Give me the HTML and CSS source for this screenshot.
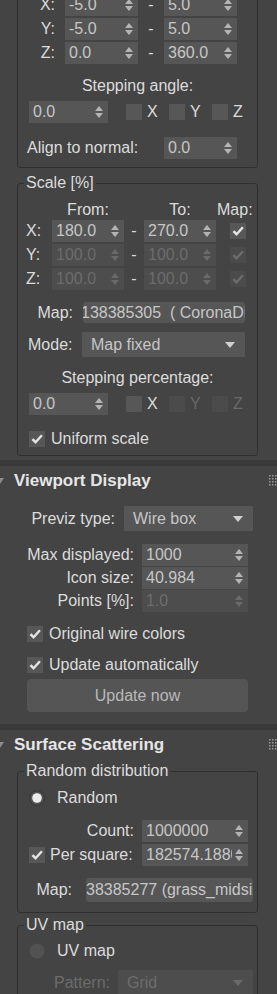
FILE: index.html
```html
<!DOCTYPE html>
<html lang="en">
<head>
    <meta charset="UTF-8">
    <meta name="viewport" content="width=device-width, initial-scale=1.0">
    <title>Corona Scatter</title>
    <link rel="stylesheet" href="styles.css">
</head>
<body>
    <!-- Parameters rollout (scrolled, top cut off) -->
    <div class="rollout rollout-cut">
        <div class="group group-top">
            <div class="range-row">
                <span class="axis">X:</span>
                <div class="spinner w73"><span class="val">-5.0</span><span class="arrows"></span></div>
                <span class="dash">-</span>
                <div class="spinner w73"><span class="val">5.0</span><span class="arrows"></span></div>
            </div>
            <div class="range-row">
                <span class="axis">Y:</span>
                <div class="spinner w73"><span class="val">-5.0</span><span class="arrows"></span></div>
                <span class="dash">-</span>
                <div class="spinner w73"><span class="val">5.0</span><span class="arrows"></span></div>
            </div>
            <div class="range-row">
                <span class="axis">Z:</span>
                <div class="spinner w73"><span class="val">0.0</span><span class="arrows"></span></div>
                <span class="dash">-</span>
                <div class="spinner w73"><span class="val">360.0</span><span class="arrows"></span></div>
            </div>

            <div class="caption cap-angle">Stepping angle:</div>
            <div class="step-row">
                <div class="spinner w79"><span class="val">0.0</span><span class="arrows"></span></div>
                <label class="axis-check first"><span class="check"></span>X</label>
                <label class="axis-check"><span class="check"></span>Y</label>
                <label class="axis-check"><span class="check"></span>Z</label>
            </div>

            <div class="align-row">
                <span class="align-label">Align to normal:</span>
                <div class="spinner w73"><span class="val">0.0</span><span class="arrows"></span></div>
            </div>
        </div>

        <fieldset class="group group-scale">
            <legend>Scale [%]</legend>
            <div class="scale-head">
                <span class="sh-axis"></span>
                <span class="sh-col">From:</span>
                <span class="sh-dash"></span>
                <span class="sh-col">To:</span>
                <span class="sh-map">Map:</span>
            </div>
            <div class="scale-row">
                <span class="s-axis">X:</span>
                <div class="spinner w72"><span class="val">180.0</span><span class="arrows"></span></div>
                <span class="s-dash">-</span>
                <div class="spinner w72"><span class="val">270.0</span><span class="arrows"></span></div>
                <span class="check on map-check"><svg viewBox="0 0 16 16"><polygon points="2.5,9 4.5,7.3 6.6,9.6 12,3.4 13.8,5 6.6,13"/></svg></span>
            </div>
            <div class="scale-row">
                <span class="s-axis">Y:</span>
                <div class="spinner w72 off"><span class="val">100.0</span><span class="arrows"></span></div>
                <span class="s-dash">-</span>
                <div class="spinner w72 off"><span class="val">100.0</span><span class="arrows"></span></div>
                <span class="check on off map-check"><svg viewBox="0 0 16 16"><polygon points="2.5,9 4.5,7.3 6.6,9.6 12,3.4 13.8,5 6.6,13"/></svg></span>
            </div>
            <div class="scale-row">
                <span class="s-axis">Z:</span>
                <div class="spinner w72 off"><span class="val">100.0</span><span class="arrows"></span></div>
                <span class="s-dash">-</span>
                <div class="spinner w72 off"><span class="val">100.0</span><span class="arrows"></span></div>
                <span class="check on off map-check"><svg viewBox="0 0 16 16"><polygon points="2.5,9 4.5,7.3 6.6,9.6 12,3.4 13.8,5 6.6,13"/></svg></span>
            </div>

            <div class="map-row">
                <span class="map-label">Map:</span>
                <div class="text-field scale-map"><span class="scroll-text">138385305  ( CoronaDistance )</span></div>
            </div>
            <div class="mode-row">
                <span class="mode-label">Mode:</span>
                <div class="combo mode-combo">Map fixed</div>
            </div>

            <div class="caption cap-percent">Stepping percentage:</div>
            <div class="step-row">
                <div class="spinner w79"><span class="val">0.0</span><span class="arrows"></span></div>
                <label class="axis-check first"><span class="check"></span>X</label>
                <label class="axis-check off"><span class="check off"></span>Y</label>
                <label class="axis-check off"><span class="check off"></span>Z</label>
            </div>

            <label class="check-row uniform">
                <span class="check on"><svg viewBox="0 0 16 16"><polygon points="2.5,9 4.5,7.3 6.6,9.6 12,3.4 13.8,5 6.6,13"/></svg></span>
                Uniform scale
            </label>
        </fieldset>
    </div>

    <!-- Viewport Display -->
    <div class="rollout rollout-viewport">
        <div class="rollout-head">
            <svg class="twisty" viewBox="0 0 8 6"><polygon points="0,0 8,0 4,6"/></svg>
            <span class="rollout-title">Viewport Display</span>
            <svg class="grip" viewBox="0 0 8 12"><rect x="0" y="0" width="1.5" height="1.5"/><rect x="3" y="0" width="1.5" height="1.5"/><rect x="6" y="0" width="1.5" height="1.5"/><rect x="0" y="3" width="1.5" height="1.5"/><rect x="3" y="3" width="1.5" height="1.5"/><rect x="6" y="3" width="1.5" height="1.5"/><rect x="0" y="6" width="1.5" height="1.5"/><rect x="3" y="6" width="1.5" height="1.5"/><rect x="6" y="6" width="1.5" height="1.5"/><rect x="0" y="9" width="1.5" height="1.5"/><rect x="3" y="9" width="1.5" height="1.5"/><rect x="6" y="9" width="1.5" height="1.5"/></svg>
        </div>

        <div class="previz-row">
            <span class="previz-label">Previz type:</span>
            <div class="combo previz-combo">Wire box</div>
        </div>

        <div class="field-row first-field">
            <span class="field-label">Max displayed:</span>
            <div class="spinner w106"><span class="val">1000</span><span class="arrows"></span></div>
        </div>
        <div class="field-row">
            <span class="field-label">Icon size:</span>
            <div class="spinner w106"><span class="val">40.984</span><span class="arrows"></span></div>
        </div>
        <div class="field-row">
            <span class="field-label">Points [%]:</span>
            <div class="spinner w106 off"><span class="val">1.0</span><span class="arrows"></span></div>
        </div>

        <label class="check-row wire-colors">
            <span class="check on"><svg viewBox="0 0 16 16"><polygon points="2.5,9 4.5,7.3 6.6,9.6 12,3.4 13.8,5 6.6,13"/></svg></span>
            Original wire colors
        </label>
        <label class="check-row auto-update">
            <span class="check on"><svg viewBox="0 0 16 16"><polygon points="2.5,9 4.5,7.3 6.6,9.6 12,3.4 13.8,5 6.6,13"/></svg></span>
            Update automatically
        </label>
        <button class="update-btn">Update now</button>
    </div>

    <!-- Surface Scattering -->
    <div class="rollout rollout-surface">
        <div class="rollout-head">
            <svg class="twisty" viewBox="0 0 8 6"><polygon points="0,0 8,0 4,6"/></svg>
            <span class="rollout-title">Surface Scattering</span>
            <svg class="grip" viewBox="0 0 8 12"><rect x="0" y="0" width="1.5" height="1.5"/><rect x="3" y="0" width="1.5" height="1.5"/><rect x="6" y="0" width="1.5" height="1.5"/><rect x="0" y="3" width="1.5" height="1.5"/><rect x="3" y="3" width="1.5" height="1.5"/><rect x="6" y="3" width="1.5" height="1.5"/><rect x="0" y="6" width="1.5" height="1.5"/><rect x="3" y="6" width="1.5" height="1.5"/><rect x="6" y="6" width="1.5" height="1.5"/><rect x="0" y="9" width="1.5" height="1.5"/><rect x="3" y="9" width="1.5" height="1.5"/><rect x="6" y="9" width="1.5" height="1.5"/></svg>
        </div>

        <fieldset class="group group-random">
            <legend>Random distribution</legend>
            <label class="radio-row">
                <svg class="radio" viewBox="0 0 16 16"><circle cx="8" cy="8" r="7.2" fill="#555" stroke="#383838" stroke-width="1.2"/><circle cx="8" cy="8" r="4.8" fill="#ececec"/></svg>
                Random
            </label>
            <div class="count-row">
                <span class="count-label">Count:</span>
                <div class="spinner w106"><span class="val">1000000</span><span class="arrows"></span></div>
            </div>
            <div class="persq-row">
                <span class="check on"><svg viewBox="0 0 16 16"><polygon points="2.5,9 4.5,7.3 6.6,9.6 12,3.4 13.8,5 6.6,13"/></svg></span>
                <span class="persq-label">Per square:</span>
                <div class="spinner w106"><span class="val">182574.1880</span><span class="arrows"></span></div>
            </div>
            <div class="map-row random-map">
                <span class="map-label">Map:</span>
                <div class="text-field surface-map"><span class="scroll-text">38385277 (grass_midsize)</span></div>
            </div>
        </fieldset>

        <fieldset class="group group-uv">
            <legend>UV map</legend>
            <label class="radio-row">
                <svg class="radio" viewBox="0 0 16 16"><circle cx="8" cy="8" r="7.6" fill="#525252"/></svg>
                UV map
            </label>
            <div class="pattern-row">
                <span class="pattern-label">Pattern:</span>
                <div class="combo pattern-combo off">Grid</div>
            </div>
        </fieldset>
    </div>
</body>
</html>
```

FILE: styles.css
```css
body {
    margin: 0;
    width: 277px;
    height: 994px;
    overflow: hidden;
    background: #444444;
    color: #dcdcdc;
    font-family: "Liberation Sans", Arial, sans-serif;
    font-size: 16px;
    line-height: 20px;
}

/* rollouts */
.rollout {
    border-bottom: 6px solid #393939;
}
.rollout-cut {
    padding-bottom: 4px;
}
.rollout-viewport {
    padding-bottom: 12px;
}
.rollout-head {
    height: 30px;
    display: flex;
    align-items: center;
}
.twisty {
    width: 8px;
    height: 6px;
    margin-left: -4px;
    fill: #8c8c8c;
    flex-shrink: 0;
}
.rollout-title {
    margin-left: 10px;
    font-weight: bold;
    font-size: 17px;
    color: #e6e6e6;
}
.grip {
    margin-left: auto;
    width: 8px;
    height: 12px;
    fill: #9a9a9a;
}

/* group boxes */
.group {
    margin: 0 0 0 17px;
    width: 241px;
    box-sizing: border-box;
    border: 1px solid #2f2f2f;
    border-radius: 3px;
    min-width: 0;
}
fieldset.group {
    padding: 8px 0 6px 0;
}
legend {
    margin-left: 6px;
    padding: 0 2px;
    line-height: 18px;
    color: #dcdcdc;
}
.group-top {
    margin-top: -30px;
    padding: 23px 0 8px 0;
}
.group-scale {
    margin-top: 6px !important;
}
.group-random {
    margin-top: 2px !important;
    padding-bottom: 10px !important;
}
.group-uv {
    margin-top: 3px !important;
    padding-top: 7px !important;
}

/* controls */
.spinner {
    height: 22px;
    background: #565656;
    display: flex;
    align-items: center;
    box-sizing: border-box;
    flex-shrink: 0;
}
.spinner .val {
    flex: 1;
    overflow: hidden;
    white-space: nowrap;
    padding-left: 4px;
    color: #c6c6c6;
}
.arrows {
    display: flex;
    flex-direction: column;
    gap: 2px;
    margin: 0 5px 0 3px;
}
.arrows::before {
    content: "";
    border-left: 4px solid transparent;
    border-right: 4px solid transparent;
    border-bottom: 5px solid #b4b4b4;
}
.arrows::after {
    content: "";
    border-left: 4px solid transparent;
    border-right: 4px solid transparent;
    border-top: 5px solid #b4b4b4;
}
.spinner.off {
    background: #4d4d4d;
}
.spinner.off .val {
    color: #6c6c6c;
}
.spinner.off .arrows::before {
    border-bottom-color: #6a6a6a;
}
.spinner.off .arrows::after {
    border-top-color: #6a6a6a;
}
.w72 { width: 72px; }
.w73 { width: 73px; }
.w79 { width: 79px; }
.w106 { width: 106px; }

.combo {
    height: 25px;
    line-height: 25px;
    background: #565656;
    color: #c6c6c6;
    padding-left: 9px;
    box-sizing: border-box;
    display: flex;
    align-items: center;
}
.combo::after {
    content: "";
    margin-left: auto;
    margin-right: 10px;
    border-left: 5px solid transparent;
    border-right: 5px solid transparent;
    border-top: 6px solid #d0d0d0;
}
.combo.off {
    background: #4d4d4d;
    color: #6c6c6c;
}
.combo.off::after {
    border-top-color: #6a6a6a;
}

.text-field {
    background: #565656;
    border-radius: 3px;
    overflow: hidden;
    white-space: pre;
    color: #c6c6c6;
    box-sizing: border-box;
}

.check {
    width: 16px;
    height: 16px;
    background: #575757;
    display: inline-flex;
    flex-shrink: 0;
}
.check svg {
    width: 16px;
    height: 16px;
    fill: #e4e4e4;
}
.check.off {
    background: #4b4b4b;
}
.check.off svg {
    fill: #6c6c6c;
}

.radio {
    width: 16px;
    height: 16px;
    flex-shrink: 0;
}

/* rotation group */
.range-row {
    display: flex;
    align-items: center;
    height: 22px;
    margin-bottom: 2px;
}
.axis {
    width: 40px;
    text-align: right;
    padding-right: 3px;
    box-sizing: border-box;
    margin-right: 7px;
}
.dash {
    width: 26px;
    text-align: center;
}
.caption {
    text-align: center;
}
.cap-angle {
    margin-top: 12px;
}
.cap-percent {
    margin-top: 11px;
}
.step-row {
    display: flex;
    align-items: center;
    height: 22px;
    margin-top: 5px;
    padding-left: 11px;
}
.axis-check {
    width: 43px;
    display: flex;
    align-items: center;
    gap: 5px;
}
.axis-check.first {
    margin-left: 18px;
}
.axis-check.off {
    color: #686868;
}
.align-row {
    display: flex;
    align-items: center;
    height: 22px;
    margin-top: 14px;
}
.align-label {
    width: 146px;
    padding-left: 9px;
    box-sizing: border-box;
}

/* scale group */
.scale-head {
    display: flex;
}
.sh-axis { width: 34px; }
.sh-col {
    width: 72px;
    text-align: center;
}
.sh-dash { width: 20px; }
.sh-map { margin-left: 1px; }
.scale-row {
    display: flex;
    align-items: center;
    height: 22px;
    margin-bottom: 2px;
}
.s-axis {
    width: 34px;
    padding-left: 8px;
    box-sizing: border-box;
}
.s-dash {
    width: 20px;
    text-align: center;
}
.map-check {
    margin-left: 14px;
}
.map-row {
    display: flex;
    align-items: center;
    margin-top: 12px;
}
.map-label {
    width: 65px;
    text-align: right;
    padding-right: 10px;
    box-sizing: border-box;
}
.scale-map {
    width: 162px;
    height: 21px;
    line-height: 21px;
}
.scale-map .scroll-text {
    display: block;
    margin-left: -2px;
}
.mode-row {
    display: flex;
    align-items: center;
    margin-top: 9px;
}
.mode-label {
    width: 64px;
    padding-left: 10px;
    box-sizing: border-box;
}
.mode-combo {
    width: 163px;
}
.check-row {
    display: flex;
    align-items: center;
    gap: 6px;
    height: 20px;
}
.uniform {
    margin-top: 14px;
    padding-left: 11px;
}

/* viewport display */
.previz-row {
    display: flex;
    align-items: center;
    margin-top: 10px;
}
.previz-label {
    width: 115px;
    text-align: right;
    margin-right: 9px;
}
.previz-combo {
    width: 129px;
}
.field-row {
    display: flex;
    align-items: center;
    margin-top: 1px;
}
.field-row.first-field {
    margin-top: 13px;
}
.field-label {
    width: 134px;
    text-align: right;
    margin-right: 8px;
}
.wire-colors {
    margin: 12px 0 0 27px;
}
.auto-update {
    margin: 11px 0 0 27px;
}
.update-btn {
    display: block;
    margin: 4px 0 0 27px;
    width: 221px;
    height: 33px;
    border: none;
    border-radius: 4px;
    background: #555555;
    color: #b9b9b9;
    font-family: inherit;
    font-size: 16px;
    padding: 0;
}

/* surface scattering */
.radio-row {
    display: flex;
    align-items: center;
    gap: 12px;
    height: 20px;
    padding-left: 11px;
}
.count-row {
    display: flex;
    align-items: center;
    margin-top: 12px;
}
.count-label {
    width: 116px;
    text-align: right;
    margin-right: 8px;
}
.persq-row {
    display: flex;
    align-items: center;
    height: 22px;
    margin-top: 2px;
    padding-left: 11px;
}
.persq-label {
    margin-left: 5px;
    width: 92px;
}
.random-map {
    margin-top: 12px;
}
.random-map .map-label {
    width: 68px;
    padding-right: 14px;
}
.surface-map {
    width: 167px;
    height: 24px;
    line-height: 24px;
}
.pattern-row {
    display: flex;
    align-items: center;
    margin-top: 9px;
}
.pattern-label {
    width: 100px;
    text-align: right;
    padding-right: 8px;
    box-sizing: border-box;
    color: #6c6c6c;
}
.pattern-combo {
    width: 135px;
}
```
